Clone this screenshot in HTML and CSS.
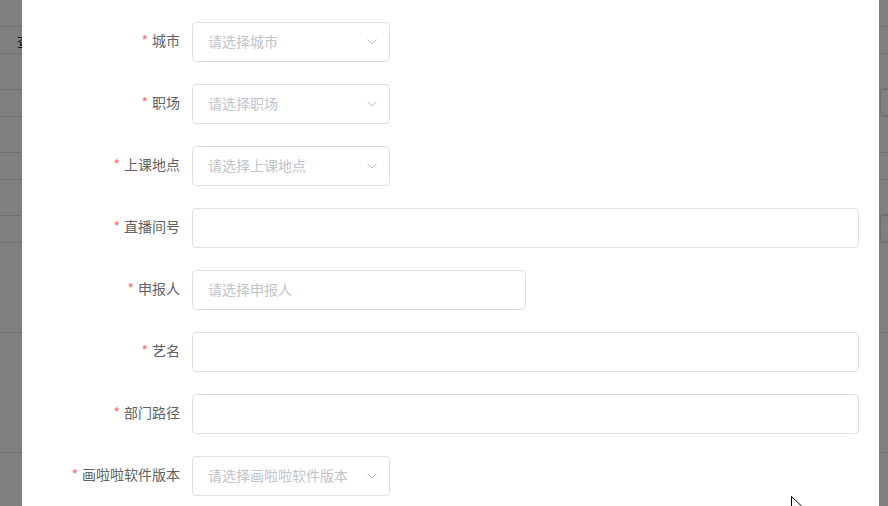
FILE: index.html
```html
<!DOCTYPE html>
<html lang="zh-CN">
<head>
  <meta charset="UTF-8" />
  <title>新增申报</title>
  <link rel="stylesheet" href="styles.css">
</head>
<body>
  <!-- tabla de fondo, tapada por la máscara -->
  <div class="page">
    <div class="row row-head"></div>
    <div class="row row-sm"><span class="cell-text">查</span></div>
    <div class="row row-md"></div>
    <div class="row row-sm"><span class="btn-stub"></span></div>
    <div class="row row-md"></div>
    <div class="row row-sm"></div>
    <div class="row row-md"></div>
    <div class="row row-sm"><span class="btn-stub"></span></div>
    <div class="row row-lg"></div>
    <div class="row row-xl"></div>
    <div class="row row-sm"></div>
  </div>

  <div class="mask"></div>

  <div class="dialog">
    <form class="form">
      <div class="form-item">
        <label class="form-label"><i class="req">*</i>城市</label>
        <div class="select">
          <span class="placeholder">请选择城市</span>
          <svg class="arrow" width="10" height="6" viewBox="0 0 10 6"><path d="M0.5 0.5 L5 5 L9.5 0.5" fill="none" stroke="#c0c4cc" stroke-width="1"/></svg>
        </div>
      </div>
      <div class="form-item">
        <label class="form-label"><i class="req">*</i>职场</label>
        <div class="select">
          <span class="placeholder">请选择职场</span>
          <svg class="arrow" width="10" height="6" viewBox="0 0 10 6"><path d="M0.5 0.5 L5 5 L9.5 0.5" fill="none" stroke="#c0c4cc" stroke-width="1"/></svg>
        </div>
      </div>
      <div class="form-item">
        <label class="form-label"><i class="req">*</i>上课地点</label>
        <div class="select">
          <span class="placeholder">请选择上课地点</span>
          <svg class="arrow" width="10" height="6" viewBox="0 0 10 6"><path d="M0.5 0.5 L5 5 L9.5 0.5" fill="none" stroke="#c0c4cc" stroke-width="1"/></svg>
        </div>
      </div>
      <div class="form-item">
        <label class="form-label"><i class="req">*</i>直播间号</label>
        <div class="input input-full"></div>
      </div>
      <div class="form-item">
        <label class="form-label"><i class="req">*</i>申报人</label>
        <div class="input input-mid">
          <span class="placeholder">请选择申报人</span>
        </div>
      </div>
      <div class="form-item">
        <label class="form-label"><i class="req">*</i>艺名</label>
        <div class="input input-full"></div>
      </div>
      <div class="form-item">
        <label class="form-label"><i class="req">*</i>部门路径</label>
        <div class="input input-full"></div>
      </div>
      <div class="form-item">
        <label class="form-label"><i class="req">*</i>画啦啦软件版本</label>
        <div class="select">
          <span class="placeholder">请选择画啦啦软件版本</span>
          <svg class="arrow" width="10" height="6" viewBox="0 0 10 6"><path d="M0.5 0.5 L5 5 L9.5 0.5" fill="none" stroke="#c0c4cc" stroke-width="1"/></svg>
        </div>
      </div>
    </form>
  </div>

  <!-- puntero del ratón -->
  <svg class="pointer" width="12" height="18" viewBox="0 0 12 18">
    <path d="M0.5 0.5 L0.5 15 L4 11.5 L6.5 17 L8.5 16 L6 10.5 L11 10.5 Z" fill="#fff" stroke="#000" stroke-width="1"/>
  </svg>
</body>
</html>
```

FILE: styles.css
```css
:root {
  --label-color: #606266;
  --placeholder: #c0c4cc;
  --border-color: #dcdfe6;
  --danger: #f56c6c;
  --font-family: "Noto Sans CJK SC", "Noto Sans", sans-serif;
}

html, body {
  margin: 0;
  padding: 0;
  height: 100%;
  overflow: hidden;
}

body {
  font-family: var(--font-family);
  background: #fff;
  position: relative;
}

/* tabla de fondo */
.page {
  display: flex;
  flex-direction: column;
}

.row {
  position: relative;
  border-top: 1px solid #dedede;
  box-sizing: border-box;
}

.row-head {
  height: 26px;
  border-top: none;
}

.row-sm { height: 27px; }
.row-md { height: 36px; }
.row-lg { height: 90px; }
.row-xl { height: 120px; }

.cell-text {
  position: absolute;
  left: 17px;
  top: 4px;
  font-size: 14px;
  color: #333;
}

.btn-stub {
  position: absolute;
  right: -6px;
  top: -2px;
  width: 14px;
  height: 28px;
  border: 1px solid #dcdfe6;
  border-radius: 4px;
  box-sizing: border-box;
}

/* máscara del diálogo */
.mask {
  position: fixed;
  inset: 0;
  background: rgba(0, 0, 0, 0.5);
}

.dialog {
  position: absolute;
  left: 22px;
  top: 0;
  bottom: 0;
  width: 857px;
  background: #fff;
  padding: 22px 20px 0;
  box-sizing: border-box;
}

.form-item {
  display: flex;
  align-items: center;
  margin-bottom: 22px;
}

.form-label {
  width: 150px;
  padding-right: 12px;
  padding-bottom: 3px;
  box-sizing: border-box;
  text-align: right;
  font-size: 14px;
  line-height: 37px;
  color: var(--label-color);
  flex-shrink: 0;
}

.req {
  font-style: normal;
  color: var(--danger);
  margin-right: 4px;
}

.select,
.input {
  position: relative;
  height: 40px;
  border: 1px solid var(--border-color);
  border-radius: 4px;
  box-sizing: border-box;
  padding: 0 15px 3px;
  display: flex;
  align-items: center;
  background: #fff;
}

.select {
  width: 198px;
}

.input-full {
  flex: 1;
}

.input-mid {
  width: 334px;
}

.placeholder {
  font-size: 14px;
  color: var(--placeholder);
  white-space: nowrap;
}

.arrow {
  position: absolute;
  right: 12px;
  top: 16px;
}

.pointer {
  position: absolute;
  left: 791px;
  top: 496px;
}
```
